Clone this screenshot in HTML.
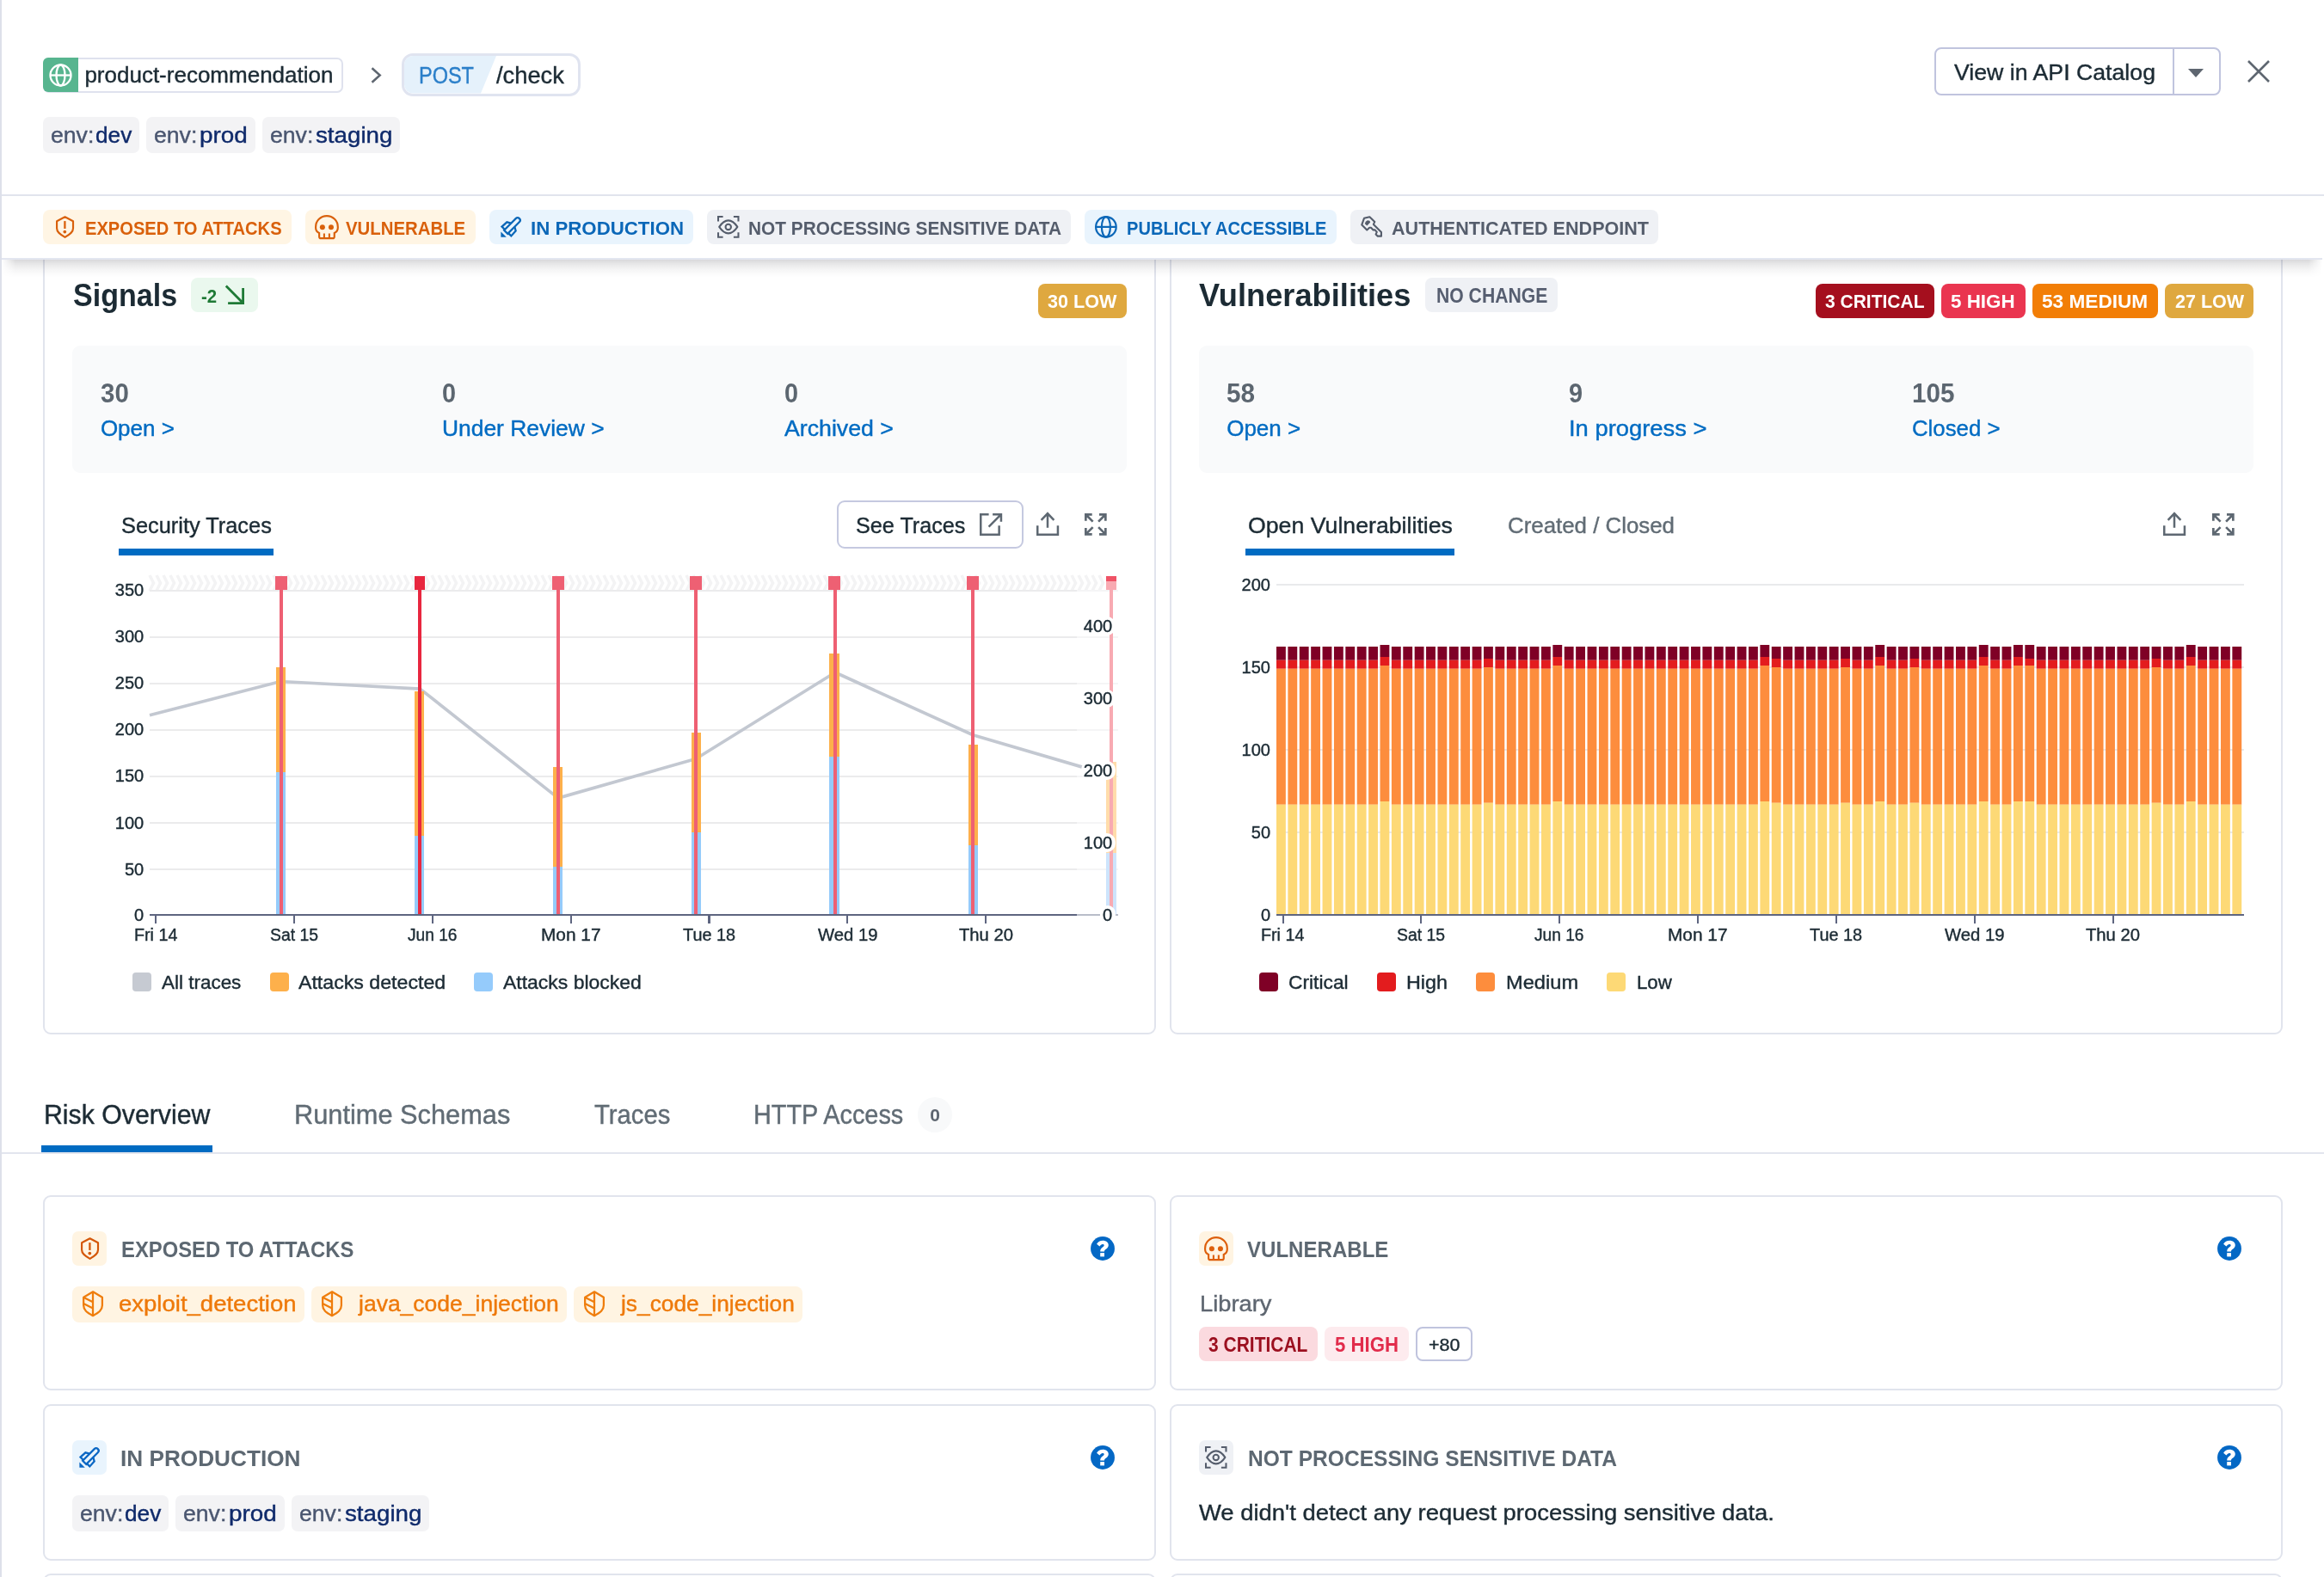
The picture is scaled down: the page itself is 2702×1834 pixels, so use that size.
<!DOCTYPE html>
<html><head><meta charset="utf-8"><title>Endpoint</title>
<style>
html,body{margin:0;padding:0;}
body{width:2702px;height:1834px;overflow:hidden;background:#fff;position:relative;font-family:"Liberation Sans",sans-serif;}
body div,body svg{position:absolute;box-sizing:border-box;}
.t{white-space:pre;}
svg{overflow:visible;}
</style></head><body><div id="root" style="left:0;top:0;width:2702px;height:1834px;will-change:transform;">
<div style="left:50.00px;top:250.00px;width:1294.00px;height:953.00px;background:#fff;border-radius:9px;border:2px solid #e1e4ed;"></div>
<div style="left:1360.00px;top:250.00px;width:1294.00px;height:953.00px;background:#fff;border-radius:9px;border:2px solid #e1e4ed;"></div>
<div style="left:2.00px;top:0.00px;width:2698.00px;height:300.00px;background:#fff;"></div>
<div style="left:2.00px;top:300.00px;width:2698.00px;height:2.00px;background:#e3e6f0;"></div>
<div style="left:2.00px;top:302.00px;width:2698.00px;height:20.00px;background:linear-gradient(rgba(10,10,20,0.155),rgba(10,10,20,0.085) 30%,rgba(10,10,20,0.035) 62%,rgba(10,10,20,0));-webkit-mask-image:linear-gradient(90deg,transparent,#000 16px,#000 calc(100% - 16px),transparent);"></div>
<div style="left:2.00px;top:226.00px;width:2700.00px;height:2.00px;background:#e1e4ed;"></div>
<div style="left:0.00px;top:0.00px;width:2.00px;height:1834.00px;background:#dde0ea;"></div>
<div style="left:50.00px;top:66.50px;width:348.50px;height:41.00px;background:#fff;border-radius:7px;border:2.5px solid #dfe2ee;"></div>
<div style="left:50.00px;top:67.00px;width:40.50px;height:40.00px;background:#57b58f;border-radius:6px 0 0 6px;"></div>
<svg style="left:56.50px;top:73.50px;" width="27" height="27" viewBox="0 0 27 27"><g fill="none" stroke="#fff" stroke-width="2.3"><circle cx="13.5" cy="13.5" r="12"/><ellipse cx="13.5" cy="13.5" rx="5" ry="12"/><path d="M1.500 13.500h24"/></g></svg>
<div class="t" style="left:98.40px;top:74px;font-size:26px;line-height:26px;color:#1c2b34;-webkit-text-stroke:0.4px;">product-recommendation</div>
<svg style="left:431.00px;top:77.50px;" width="13" height="20" viewBox="0 0 13 20"><path d="M1.500 1.300l9.200 8.200-9.200 8.200" fill="none" stroke="#5e6670" stroke-width="2.500"/></svg>
<div style="left:467.00px;top:62.00px;width:207.50px;height:49.50px;background:#fff;border-radius:13px;border:3px solid #e0e4f0;"></div>
<svg style="left:470px;top:65px" width="110" height="43.5" viewBox="0 0 110 43.5"><path d="M0 10a10 10 0 0 1 10-10H107L89 43.500H10a10 10 0 0 1-10-10z" fill="#e5f1fb"/></svg>
<div class="t" style="left:486.50px;top:75px;font-size:27px;line-height:27px;color:#2b7fc9;-webkit-text-stroke:0.4px;transform:scaleX(0.8699);transform-origin:0 0;">POST</div>
<div class="t" style="left:577.00px;top:75px;font-size:27px;line-height:27px;color:#1c2b34;-webkit-text-stroke:0.4px;transform:scaleX(1.0107);transform-origin:0 0;">/check</div>
<div style="left:50.00px;top:136.00px;width:112.00px;height:42.00px;background:#f3f3f5;border-radius:7px;"></div>
<div class="t" style="left:58.90px;top:144px;font-size:26px;line-height:26px;color:#4a5670;-webkit-text-stroke:0.4px;transform:scaleX(1.0236);transform-origin:0 0;">env:</div>
<div class="t" style="left:110.90px;top:144px;font-size:26px;line-height:26px;color:#0f2a6b;-webkit-text-stroke:0.4px;transform:scaleX(1.0081);transform-origin:0 0;">dev</div>
<div style="left:170.00px;top:136.00px;width:127.00px;height:42.00px;background:#f3f3f5;border-radius:7px;"></div>
<div class="t" style="left:178.90px;top:144px;font-size:26px;line-height:26px;color:#4a5670;-webkit-text-stroke:0.4px;transform:scaleX(1.0236);transform-origin:0 0;">env:</div>
<div class="t" style="left:232.40px;top:144px;font-size:26px;line-height:26px;color:#0f2a6b;-webkit-text-stroke:0.4px;transform:scaleX(1.0712);transform-origin:0 0;">prod</div>
<div style="left:305.00px;top:136.00px;width:160.00px;height:42.00px;background:#f3f3f5;border-radius:7px;"></div>
<div class="t" style="left:313.90px;top:144px;font-size:26px;line-height:26px;color:#4a5670;-webkit-text-stroke:0.4px;transform:scaleX(1.0236);transform-origin:0 0;">env:</div>
<div class="t" style="left:366.70px;top:144px;font-size:26px;line-height:26px;color:#0f2a6b;-webkit-text-stroke:0.4px;transform:scaleX(1.0662);transform-origin:0 0;">staging</div>
<div style="left:2249.00px;top:55.00px;width:332.50px;height:56.00px;background:#fff;border-radius:8px;border:2px solid #c0c4de;"></div>
<div style="left:2525.70px;top:55.00px;width:2.00px;height:56.00px;background:#c0c4de;"></div>
<div class="t" style="left:2271.50px;top:71px;font-size:26px;line-height:26px;color:#1c2b34;-webkit-text-stroke:0.4px;transform:scaleX(1.0268);transform-origin:0 0;">View in API Catalog</div>
<svg style="left:2544.00px;top:79.50px;" width="18" height="11" viewBox="0 0 18 11"><path d="M0 0h18l-9 10z" fill="#5e6670"/></svg>
<svg style="left:2613.00px;top:69.50px;" width="26" height="26" viewBox="0 0 26 26"><path d="M1 1l24 24M25 1l-24 24" stroke="#5e6670" stroke-width="2.6" fill="none"/></svg>
<div style="left:50.00px;top:243.70px;width:289.00px;height:40.00px;background:#fff5e4;border-radius:8px;"></div>
<svg style="left:64.6px;top:250.85px" width="21.1" height="26.2" viewBox="0 0 21.1 26.2"><path d="M10.550 1.250L1.080 6.200V14.500C1.080 19 4.500 21.500 10.550 24.900 16.600 21.500 20.020 19 20.020 14.500V6.200z" fill="none" stroke="#d9600b" stroke-width="2.150" stroke-linejoin="round"/><path d="M10.400 6.100V14.950" stroke="#d9600b" stroke-width="2.300" fill="none"/><circle cx="10.300" cy="18.550" r="1.850" fill="#d9600b"/></svg>
<div class="t" style="left:98.50px;top:255px;font-size:22.5px;line-height:22.5px;color:#d9600b;font-weight:700;transform:scaleX(0.8948);transform-origin:0 0;">EXPOSED TO ATTACKS</div>
<div style="left:355.00px;top:243.70px;width:198.00px;height:40.00px;background:#fff5e4;border-radius:8px;"></div>
<svg style="left:366.1px;top:249.8px" width="27.9" height="28.3" viewBox="0 0 27.9 28.3"><path d="M5.130 25.200V20.900C2.600 19.900 1.080 17.800 1.080 14.800V13.950A12.870 12.870 0 0 1 26.820 13.950V14.800C26.820 17.800 25.300 19.900 22.770 20.900V25.200A2 2 0 0 1 20.770 27.200H7.130A2 2 0 0 1 5.130 25.200z" fill="none" stroke="#d9600b" stroke-width="2.150"/><circle cx="8.870" cy="14.250" r="3" fill="#d9600b"/><circle cx="18.950" cy="14.250" r="3" fill="#d9600b"/><path d="M10.900 21.500V27.200M16.870 21.500V27.200" stroke="#d9600b" stroke-width="2.050" fill="none"/></svg>
<div class="t" style="left:402.30px;top:255px;font-size:22.5px;line-height:22.5px;color:#d9600b;font-weight:700;transform:scaleX(0.9051);transform-origin:0 0;">VULNERABLE</div>
<div style="left:569.00px;top:243.70px;width:237.00px;height:40.00px;background:#e9f4fd;border-radius:8px;"></div>
<svg style="left:581.5px;top:252.2px" width="24.5" height="24.8" viewBox="0 0 24.5 24.8"><g transform="translate(14 9.950) rotate(45)" fill="none" stroke="#0b67b8" stroke-width="2.300" stroke-linejoin="miter"><path d="M-2.900 11.050V-8.100A2.900 2.950 0 0 1 2.900 -8.100V11.050z"/><path d="M-2.900 -0.400L-7.250 2.100-7.650 10H-2.900M2.900 -0.400L7.250 2.100 7.650 10H2.900"/></g><path d="M0.400 17.500V23.700H6.800z" fill="#0b67b8"/></svg>
<div class="t" style="left:616.50px;top:255px;font-size:22.5px;line-height:22.5px;color:#0b67b8;font-weight:700;transform:scaleX(0.9889);transform-origin:0 0;">IN PRODUCTION</div>
<div style="left:822.00px;top:243.70px;width:423.00px;height:40.00px;background:#eff1f5;border-radius:8px;"></div>
<svg style="left:834.2px;top:251px" width="25.5" height="25.8" viewBox="0 0 25.5 25.8"><g fill="none" stroke="#555d6c" stroke-width="2.050"><path d="M1.020 6.600V1.020H6.600M18.900 1.020H24.480V6.600M24.480 19.200V24.780H18.900M6.600 24.780H1.020V19.200"/><path d="M2.200 12.900C5.500 8 8.800 5.400 12.800 5.400S20.100 8 23.400 12.900C20.100 17.800 16.800 20.400 12.800 20.400S5.500 17.800 2.200 12.900z" stroke-linejoin="round"/><circle cx="12.750" cy="12.950" r="3.200"/></g></svg>
<div class="t" style="left:869.70px;top:255px;font-size:22.5px;line-height:22.5px;color:#555d6c;font-weight:700;transform:scaleX(0.9263);transform-origin:0 0;">NOT PROCESSING SENSITIVE DATA</div>
<div style="left:1261.00px;top:243.70px;width:293.00px;height:40.00px;background:#e9f4fd;border-radius:8px;"></div>
<svg style="left:1273.1px;top:250.8px" width="25.8" height="25.8" viewBox="0 0 25.8 25.8"><g fill="none" stroke="#0b67b8" stroke-width="2.200"><circle cx="12.900" cy="12.900" r="11.800"/><ellipse cx="12.900" cy="12.900" rx="5" ry="11.800"/><path d="M1.100 12.900h23.600"/></g></svg>
<div class="t" style="left:1309.70px;top:255px;font-size:22.5px;line-height:22.5px;color:#0b67b8;font-weight:700;transform:scaleX(0.8923);transform-origin:0 0;">PUBLICLY ACCESSIBLE</div>
<div style="left:1570.00px;top:243.70px;width:358.00px;height:40.00px;background:#eff1f5;border-radius:8px;"></div>
<svg style="left:1582.1px;top:251px" width="25" height="24.8" viewBox="0 0 25 24.8"><path d="M4 2.800L10.400 1.200 16.300 6.900 14.900 9.900 23.950 19V23.650H19.800L17.600 21.400 18.800 18.900 16.600 16.400H14.600L12 13.700H10.200L7.300 16.400 1.300 10.400z" fill="none" stroke="#555d6c" stroke-width="2.100" stroke-linejoin="round"/><path d="M7.900 5.200L10.400 5.700 11.200 7.500 7.400 11.500 4.800 9.200 5.800 6.700z" fill="#555d6c"/></svg>
<div class="t" style="left:1617.80px;top:255px;font-size:22.5px;line-height:22.5px;color:#555d6c;font-weight:700;transform:scaleX(0.9581);transform-origin:0 0;">AUTHENTICATED ENDPOINT</div>
<div class="t" style="left:84.60px;top:325px;font-size:37px;line-height:37px;color:#1c2b34;font-weight:700;transform:scaleX(0.9199);transform-origin:0 0;">Signals</div>
<div style="left:222.00px;top:323.00px;width:78.00px;height:40.00px;background:#eaf8ee;border-radius:8px;"></div>
<div class="t" style="left:233.90px;top:334px;font-size:22px;line-height:22px;color:#1f7a36;font-weight:700;transform:scaleX(0.9244);transform-origin:0 0;">-2</div>
<svg style="left:261px;top:331px" width="23" height="23" viewBox="0 0 23 23"><path d="M1.800 1.400L21.300 21.300M21.600 4.100V21.600H4.100" fill="none" stroke="#1f7a36" stroke-width="2.800"/></svg>
<div style="left:1206.60px;top:330.00px;width:103.00px;height:39.50px;background:#dfa83f;border-radius:8px;"></div>
<div class="t" style="left:1218.00px;top:340px;font-size:22px;line-height:22px;color:#fff;font-weight:700;transform:scaleX(0.9823);transform-origin:0 0;">30 LOW</div>
<div style="left:84.00px;top:402.00px;width:1226.00px;height:147.50px;background:#f9fafb;border-radius:9px;"></div>
<div class="t" style="left:116.90px;top:441px;font-size:32px;line-height:32px;color:#5c6670;font-weight:700;transform:scaleX(0.9206);transform-origin:0 0;">30</div>
<div class="t" style="left:116.90px;top:485px;font-size:26px;line-height:26px;color:#006bc2;-webkit-text-stroke:0.4px;">Open &gt;</div>
<div class="t" style="left:514.40px;top:441px;font-size:32px;line-height:32px;color:#5c6670;font-weight:700;transform:scaleX(0.9009);transform-origin:0 0;">0</div>
<div class="t" style="left:514.40px;top:485px;font-size:26px;line-height:26px;color:#006bc2;-webkit-text-stroke:0.4px;transform:scaleX(1.0154);transform-origin:0 0;">Under Review &gt;</div>
<div class="t" style="left:911.60px;top:441px;font-size:32px;line-height:32px;color:#5c6670;font-weight:700;transform:scaleX(0.9009);transform-origin:0 0;">0</div>
<div class="t" style="left:911.60px;top:485px;font-size:26px;line-height:26px;color:#006bc2;-webkit-text-stroke:0.4px;transform:scaleX(1.0273);transform-origin:0 0;">Archived &gt;</div>
<div class="t" style="left:140.60px;top:598px;font-size:26px;line-height:26px;color:#1c2b34;-webkit-text-stroke:0.4px;transform:scaleX(0.9758);transform-origin:0 0;">Security Traces</div>
<div style="left:138.00px;top:638.00px;width:180.00px;height:8.00px;background:#006bc2;"></div>
<div style="left:973.00px;top:582.00px;width:217.30px;height:55.50px;background:#fff;border-radius:9px;border:2px solid #c5c9e0;"></div>
<div class="t" style="left:994.70px;top:598px;font-size:26px;line-height:26px;color:#1c2b34;-webkit-text-stroke:0.4px;transform:scaleX(0.9691);transform-origin:0 0;">See Traces</div>
<svg style="left:1138.8px;top:597px" width="26.3" height="26" viewBox="0 0 26.3 26"><g fill="none" stroke="#5e6872" stroke-width="2.500"><path d="M10.600 1.250H1.250V24.650H22.650V14.200"/><path d="M15.100 1.250H24.950V9.700M24.500 1.700L10.600 15.600"/></g></svg>
<svg style="left:1205px;top:595px" width="26.2" height="28" viewBox="0 0 26.2 28"><g fill="none" stroke="#5e6872" stroke-width="2.500"><path d="M1.250 16.200V26.700H24.950V16.200"/><path d="M13 1.800V18.800M5.600 9.800L13 2.100 20.400 9.800"/></g></svg>
<svg style="left:1261.2px;top:597.1px" width="25.7" height="25.7" viewBox="0 0 25.7 25.7"><g fill="none" stroke="#5e6872" stroke-width="2.700"><path d="M1.350 8.700V1.350H8.700M1.800 1.800L9.600 9.600M17 1.350H24.350V8.700M23.900 1.800L16.100 9.600M24.350 17V24.350H17M23.900 23.900L16.100 16.100M8.700 24.350H1.350V17M1.800 23.900L9.600 16.100"/></g></svg>
<svg style="left:174px;top:670px" width="1112" height="16" viewBox="0 0 1112 16"><defs><linearGradient id="cf" x1="0" x2="1"><stop offset="0.9" stop-color="#f3f3f4"/><stop offset="1" stop-color="#f8f8f9"/></linearGradient></defs><g fill="none" stroke="#f3f3f4" stroke-width="3.600"><path d="M0 -1l4.5 9-4.5 9" /><path d="M8 -1l4.5 9-4.5 9" /><path d="M16 -1l4.5 9-4.5 9" /><path d="M24 -1l4.5 9-4.5 9" /><path d="M32 -1l4.5 9-4.5 9" /><path d="M40 -1l4.5 9-4.5 9" /><path d="M48 -1l4.5 9-4.5 9" /><path d="M56 -1l4.5 9-4.5 9" /><path d="M64 -1l4.5 9-4.5 9" /><path d="M72 -1l4.5 9-4.5 9" /><path d="M80 -1l4.5 9-4.5 9" /><path d="M88 -1l4.5 9-4.5 9" /><path d="M96 -1l4.5 9-4.5 9" /><path d="M104 -1l4.5 9-4.5 9" /><path d="M112 -1l4.5 9-4.5 9" /><path d="M120 -1l4.5 9-4.5 9" /><path d="M128 -1l4.5 9-4.5 9" /><path d="M136 -1l4.5 9-4.5 9" /><path d="M144 -1l4.5 9-4.5 9" /><path d="M152 -1l4.5 9-4.5 9" /><path d="M160 -1l4.5 9-4.5 9" /><path d="M168 -1l4.5 9-4.5 9" /><path d="M176 -1l4.5 9-4.5 9" /><path d="M184 -1l4.5 9-4.5 9" /><path d="M192 -1l4.5 9-4.5 9" /><path d="M200 -1l4.5 9-4.5 9" /><path d="M208 -1l4.5 9-4.5 9" /><path d="M216 -1l4.5 9-4.5 9" /><path d="M224 -1l4.5 9-4.5 9" /><path d="M232 -1l4.5 9-4.5 9" /><path d="M240 -1l4.5 9-4.5 9" /><path d="M248 -1l4.5 9-4.5 9" /><path d="M256 -1l4.5 9-4.5 9" /><path d="M264 -1l4.5 9-4.5 9" /><path d="M272 -1l4.5 9-4.5 9" /><path d="M280 -1l4.5 9-4.5 9" /><path d="M288 -1l4.5 9-4.5 9" /><path d="M296 -1l4.5 9-4.5 9" /><path d="M304 -1l4.5 9-4.5 9" /><path d="M312 -1l4.5 9-4.5 9" /><path d="M320 -1l4.5 9-4.5 9" /><path d="M328 -1l4.5 9-4.5 9" /><path d="M336 -1l4.5 9-4.5 9" /><path d="M344 -1l4.5 9-4.5 9" /><path d="M352 -1l4.5 9-4.5 9" /><path d="M360 -1l4.5 9-4.5 9" /><path d="M368 -1l4.5 9-4.5 9" /><path d="M376 -1l4.5 9-4.5 9" /><path d="M384 -1l4.5 9-4.5 9" /><path d="M392 -1l4.5 9-4.5 9" /><path d="M400 -1l4.5 9-4.5 9" /><path d="M408 -1l4.5 9-4.5 9" /><path d="M416 -1l4.5 9-4.5 9" /><path d="M424 -1l4.5 9-4.5 9" /><path d="M432 -1l4.5 9-4.5 9" /><path d="M440 -1l4.5 9-4.5 9" /><path d="M448 -1l4.5 9-4.5 9" /><path d="M456 -1l4.5 9-4.5 9" /><path d="M464 -1l4.5 9-4.5 9" /><path d="M472 -1l4.5 9-4.5 9" /><path d="M480 -1l4.5 9-4.5 9" /><path d="M488 -1l4.5 9-4.5 9" /><path d="M496 -1l4.5 9-4.5 9" /><path d="M504 -1l4.5 9-4.5 9" /><path d="M512 -1l4.5 9-4.5 9" /><path d="M520 -1l4.5 9-4.5 9" /><path d="M528 -1l4.5 9-4.5 9" /><path d="M536 -1l4.5 9-4.5 9" /><path d="M544 -1l4.5 9-4.5 9" /><path d="M552 -1l4.5 9-4.5 9" /><path d="M560 -1l4.5 9-4.5 9" /><path d="M568 -1l4.5 9-4.5 9" /><path d="M576 -1l4.5 9-4.5 9" /><path d="M584 -1l4.5 9-4.5 9" /><path d="M592 -1l4.5 9-4.5 9" /><path d="M600 -1l4.5 9-4.5 9" /><path d="M608 -1l4.5 9-4.5 9" /><path d="M616 -1l4.5 9-4.5 9" /><path d="M624 -1l4.5 9-4.5 9" /><path d="M632 -1l4.5 9-4.5 9" /><path d="M640 -1l4.5 9-4.5 9" /><path d="M648 -1l4.5 9-4.5 9" /><path d="M656 -1l4.5 9-4.5 9" /><path d="M664 -1l4.5 9-4.5 9" /><path d="M672 -1l4.5 9-4.5 9" /><path d="M680 -1l4.5 9-4.5 9" /><path d="M688 -1l4.5 9-4.5 9" /><path d="M696 -1l4.5 9-4.5 9" /><path d="M704 -1l4.5 9-4.5 9" /><path d="M712 -1l4.5 9-4.5 9" /><path d="M720 -1l4.5 9-4.5 9" /><path d="M728 -1l4.5 9-4.5 9" /><path d="M736 -1l4.5 9-4.5 9" /><path d="M744 -1l4.5 9-4.5 9" /><path d="M752 -1l4.5 9-4.5 9" /><path d="M760 -1l4.5 9-4.5 9" /><path d="M768 -1l4.5 9-4.5 9" /><path d="M776 -1l4.5 9-4.5 9" /><path d="M784 -1l4.5 9-4.5 9" /><path d="M792 -1l4.5 9-4.5 9" /><path d="M800 -1l4.5 9-4.5 9" /><path d="M808 -1l4.5 9-4.5 9" /><path d="M816 -1l4.5 9-4.5 9" /><path d="M824 -1l4.5 9-4.5 9" /><path d="M832 -1l4.5 9-4.5 9" /><path d="M840 -1l4.5 9-4.5 9" /><path d="M848 -1l4.5 9-4.5 9" /><path d="M856 -1l4.5 9-4.5 9" /><path d="M864 -1l4.5 9-4.5 9" /><path d="M872 -1l4.5 9-4.5 9" /><path d="M880 -1l4.5 9-4.5 9" /><path d="M888 -1l4.5 9-4.5 9" /><path d="M896 -1l4.5 9-4.5 9" /><path d="M904 -1l4.5 9-4.5 9" /><path d="M912 -1l4.5 9-4.5 9" /><path d="M920 -1l4.5 9-4.5 9" /><path d="M928 -1l4.5 9-4.5 9" /><path d="M936 -1l4.5 9-4.5 9" /><path d="M944 -1l4.5 9-4.5 9" /><path d="M952 -1l4.5 9-4.5 9" /><path d="M960 -1l4.5 9-4.5 9" /><path d="M968 -1l4.5 9-4.5 9" /><path d="M976 -1l4.5 9-4.5 9" /><path d="M984 -1l4.5 9-4.5 9" /><path d="M992 -1l4.5 9-4.5 9" /><path d="M1000 -1l4.5 9-4.5 9" /><path d="M1008 -1l4.5 9-4.5 9" /><path d="M1016 -1l4.5 9-4.5 9" /><path d="M1024 -1l4.5 9-4.5 9" /><path d="M1032 -1l4.5 9-4.5 9" /><path d="M1040 -1l4.5 9-4.5 9" /><path d="M1048 -1l4.5 9-4.5 9" /><path d="M1056 -1l4.5 9-4.5 9" /><path d="M1064 -1l4.5 9-4.5 9" /><path d="M1072 -1l4.5 9-4.5 9" /><path d="M1080 -1l4.5 9-4.5 9" /><path d="M1088 -1l4.5 9-4.5 9" /><path d="M1096 -1l4.5 9-4.5 9" /><path d="M1104 -1l4.5 9-4.5 9" /></g></svg>
<div style="left:174.00px;top:1009.98px;width:1077.50px;height:2.00px;background:#ebebec;"></div>
<div style="left:1251.50px;top:1009.98px;width:48.50px;height:2.00px;background:#f5f5f6;"></div>
<div style="left:174.00px;top:955.96px;width:1077.50px;height:2.00px;background:#ebebec;"></div>
<div style="left:1251.50px;top:955.96px;width:48.50px;height:2.00px;background:#f5f5f6;"></div>
<div style="left:174.00px;top:901.94px;width:1077.50px;height:2.00px;background:#ebebec;"></div>
<div style="left:1251.50px;top:901.94px;width:48.50px;height:2.00px;background:#f5f5f6;"></div>
<div style="left:174.00px;top:847.92px;width:1077.50px;height:2.00px;background:#ebebec;"></div>
<div style="left:1251.50px;top:847.92px;width:48.50px;height:2.00px;background:#f5f5f6;"></div>
<div style="left:174.00px;top:793.90px;width:1077.50px;height:2.00px;background:#ebebec;"></div>
<div style="left:1251.50px;top:793.90px;width:48.50px;height:2.00px;background:#f5f5f6;"></div>
<div style="left:174.00px;top:739.88px;width:1077.50px;height:2.00px;background:#ebebec;"></div>
<div style="left:1251.50px;top:739.88px;width:48.50px;height:2.00px;background:#f5f5f6;"></div>
<div style="left:174.00px;top:685.86px;width:1077.50px;height:2.00px;background:#ebebec;"></div>
<div style="left:1251.50px;top:685.86px;width:48.50px;height:2.00px;background:#f5f5f6;"></div>
<div class="t" style="left:156.10px;top:1054px;font-size:20px;line-height:20px;color:#1c2b34;-webkit-text-stroke:0.4px;">0</div>
<div class="t" style="left:145.00px;top:1001px;font-size:20px;line-height:20px;color:#1c2b34;-webkit-text-stroke:0.4px;">50</div>
<div class="t" style="left:133.80px;top:947px;font-size:20px;line-height:20px;color:#1c2b34;-webkit-text-stroke:0.4px;">100</div>
<div class="t" style="left:133.80px;top:892px;font-size:20px;line-height:20px;color:#1c2b34;-webkit-text-stroke:0.4px;">150</div>
<div class="t" style="left:133.80px;top:838px;font-size:20px;line-height:20px;color:#1c2b34;-webkit-text-stroke:0.4px;">200</div>
<div class="t" style="left:133.80px;top:784px;font-size:20px;line-height:20px;color:#1c2b34;-webkit-text-stroke:0.4px;">250</div>
<div class="t" style="left:133.80px;top:730px;font-size:20px;line-height:20px;color:#1c2b34;-webkit-text-stroke:0.4px;">300</div>
<div class="t" style="left:133.80px;top:676px;font-size:20px;line-height:20px;color:#1c2b34;-webkit-text-stroke:0.4px;">350</div>
<svg style="left:0.00px;top:0.00px;pointer-events:none;" width="2702" height="1834" viewBox="0 0 2702 1834"><polyline points="174,831.8 326.3,792.5 488.4,801.1 648.9,928.1 809,882.5 971,782 1131.2,854.8 1258.5,892.1" fill="none" stroke="#c3c8d1" stroke-width="3.7" stroke-linejoin="round"/></svg>
<div style="left:321.10px;top:776.00px;width:11.40px;height:122.20px;background:#fdb04b;"></div>
<div style="left:321.10px;top:898.20px;width:11.40px;height:165.50px;background:#95cbfb;"></div>
<div style="left:325.00px;top:678.00px;width:4.00px;height:385.70px;background:#ee6073;"></div>
<div style="left:319.80px;top:670.00px;width:14.00px;height:16.00px;background:#ee6073;"></div>
<div style="left:482.00px;top:804.00px;width:11.00px;height:168.00px;background:#fdb04b;"></div>
<div style="left:482.00px;top:972.00px;width:11.00px;height:91.70px;background:#95cbfb;"></div>
<div style="left:485.90px;top:678.00px;width:4.60px;height:385.70px;background:#e8273f;"></div>
<div style="left:481.50px;top:670.00px;width:12.00px;height:16.00px;background:#e8273f;"></div>
<div style="left:642.90px;top:892.10px;width:11.30px;height:116.20px;background:#fdb04b;"></div>
<div style="left:642.90px;top:1008.30px;width:11.30px;height:55.40px;background:#95cbfb;"></div>
<div style="left:646.80px;top:678.00px;width:4.20px;height:385.70px;background:#ee6073;"></div>
<div style="left:641.55px;top:670.00px;width:14.00px;height:16.00px;background:#ee6073;"></div>
<div style="left:803.90px;top:852.00px;width:11.00px;height:115.80px;background:#fdb04b;"></div>
<div style="left:803.90px;top:967.80px;width:11.00px;height:95.90px;background:#95cbfb;"></div>
<div style="left:807.10px;top:678.00px;width:4.00px;height:385.70px;background:#ee6073;"></div>
<div style="left:802.40px;top:670.00px;width:14.00px;height:16.00px;background:#ee6073;"></div>
<div style="left:964.40px;top:760.00px;width:11.80px;height:119.70px;background:#fdb04b;"></div>
<div style="left:964.40px;top:879.70px;width:11.80px;height:184.00px;background:#95cbfb;"></div>
<div style="left:969.00px;top:678.00px;width:4.00px;height:385.70px;background:#ee6073;"></div>
<div style="left:963.30px;top:670.00px;width:14.00px;height:16.00px;background:#ee6073;"></div>
<div style="left:1125.70px;top:865.90px;width:11.00px;height:117.50px;background:#fdb04b;"></div>
<div style="left:1125.70px;top:983.40px;width:11.00px;height:80.30px;background:#95cbfb;"></div>
<div style="left:1129.20px;top:678.00px;width:4.00px;height:385.70px;background:#ee6073;"></div>
<div style="left:1124.20px;top:670.00px;width:14.00px;height:16.00px;background:#ee6073;"></div>
<div style="left:1286.30px;top:885.70px;width:11.30px;height:106.00px;background:#ffdcab;"></div>
<div style="left:1286.30px;top:991.60px;width:11.30px;height:72.10px;background:#cde4fc;"></div>
<div style="left:1290.00px;top:686.00px;width:4.00px;height:377.70px;background:#f8aab2;"></div>
<div style="left:1286.00px;top:670.00px;width:12.00px;height:6.00px;background:#ef5366;"></div>
<div style="left:1286.00px;top:676.00px;width:12.00px;height:10.00px;background:#f8aab2;"></div>
<div style="left:174.00px;top:1062.70px;width:1077.50px;height:2.20px;background:#5e6580;"></div>
<div style="left:1251.50px;top:1062.70px;width:48.50px;height:2.00px;background:#b9bdc9;"></div>
<div style="left:180.10px;top:1064.90px;width:2.20px;height:8.80px;background:#5e6580;"></div>
<div class="t" style="left:156.00px;top:1077px;font-size:20px;line-height:20px;color:#1c2b34;-webkit-text-stroke:0.4px;transform:scaleX(0.9863);transform-origin:0 0;">Fri 14</div>
<div style="left:340.90px;top:1064.90px;width:2.20px;height:8.80px;background:#5e6580;"></div>
<div class="t" style="left:314.00px;top:1077px;font-size:20px;line-height:20px;color:#1c2b34;-webkit-text-stroke:0.4px;transform:scaleX(0.9689);transform-origin:0 0;">Sat 15</div>
<div style="left:501.50px;top:1064.90px;width:2.20px;height:8.80px;background:#5e6580;"></div>
<div class="t" style="left:473.85px;top:1077px;font-size:20px;line-height:20px;color:#1c2b34;-webkit-text-stroke:0.4px;transform:scaleX(0.9567);transform-origin:0 0;">Jun 16</div>
<div style="left:663.10px;top:1064.90px;width:2.20px;height:8.80px;background:#5e6580;"></div>
<div class="t" style="left:629.45px;top:1077px;font-size:20px;line-height:20px;color:#1c2b34;-webkit-text-stroke:0.4px;transform:scaleX(1.0420);transform-origin:0 0;">Mon 17</div>
<div style="left:823.40px;top:1064.90px;width:2.20px;height:8.80px;background:#5e6580;"></div>
<div class="t" style="left:794.00px;top:1077px;font-size:20px;line-height:20px;color:#1c2b34;-webkit-text-stroke:0.4px;transform:scaleX(0.9919);transform-origin:0 0;">Tue 18</div>
<div style="left:984.30px;top:1064.90px;width:2.20px;height:8.80px;background:#5e6580;"></div>
<div class="t" style="left:950.65px;top:1077px;font-size:20px;line-height:20px;color:#1c2b34;-webkit-text-stroke:0.4px;transform:scaleX(1.0131);transform-origin:0 0;">Wed 19</div>
<div style="left:1145.10px;top:1064.90px;width:2.20px;height:8.80px;background:#5e6580;"></div>
<div class="t" style="left:1114.70px;top:1077px;font-size:20px;line-height:20px;color:#1c2b34;-webkit-text-stroke:0.4px;transform:scaleX(1.0112);transform-origin:0 0;">Thu 20</div>
<div style="left:1256.83px;top:717.20px;width:40.37px;height:21.50px;background:#fff;border-radius:10px;"></div>
<div class="t" style="left:1259.80px;top:718px;font-size:20px;line-height:20px;color:#1c2b34;-webkit-text-stroke:0.4px;">400</div>
<div style="left:1256.83px;top:801.70px;width:40.37px;height:21.50px;background:#fff;border-radius:10px;"></div>
<div class="t" style="left:1259.80px;top:802px;font-size:20px;line-height:20px;color:#1c2b34;-webkit-text-stroke:0.4px;">300</div>
<div style="left:1256.83px;top:885.20px;width:40.37px;height:21.50px;background:#fff;border-radius:10px;"></div>
<div class="t" style="left:1259.80px;top:886px;font-size:20px;line-height:20px;color:#1c2b34;-webkit-text-stroke:0.4px;">200</div>
<div style="left:1256.83px;top:969.30px;width:40.37px;height:21.50px;background:#fff;border-radius:10px;"></div>
<div class="t" style="left:1259.80px;top:970px;font-size:20px;line-height:20px;color:#1c2b34;-webkit-text-stroke:0.4px;">100</div>
<div style="left:1279.08px;top:1053.30px;width:18.12px;height:21.50px;background:#fff;border-radius:10px;"></div>
<div class="t" style="left:1282.10px;top:1054px;font-size:20px;line-height:20px;color:#1c2b34;-webkit-text-stroke:0.4px;">0</div>
<div style="left:154.00px;top:1131.00px;width:22.00px;height:22.00px;background:#c6cad2;border-radius:4px;"></div>
<div class="t" style="left:188.30px;top:1132px;font-size:22px;line-height:22px;color:#1c2b34;-webkit-text-stroke:0.4px;transform:scaleX(1.0208);transform-origin:0 0;">All traces</div>
<div style="left:313.70px;top:1131.00px;width:22.00px;height:22.00px;background:#fdb04b;border-radius:4px;"></div>
<div class="t" style="left:347.40px;top:1132px;font-size:22px;line-height:22px;color:#1c2b34;-webkit-text-stroke:0.4px;transform:scaleX(1.0523);transform-origin:0 0;">Attacks detected</div>
<div style="left:551.00px;top:1131.00px;width:22.00px;height:22.00px;background:#95cbfb;border-radius:4px;"></div>
<div class="t" style="left:585.00px;top:1132px;font-size:22px;line-height:22px;color:#1c2b34;-webkit-text-stroke:0.4px;transform:scaleX(1.0434);transform-origin:0 0;">Attacks blocked</div>
<div class="t" style="left:1394.10px;top:325px;font-size:37px;line-height:37px;color:#1c2b34;font-weight:700;transform:scaleX(0.9797);transform-origin:0 0;">Vulnerabilities</div>
<div style="left:1657.00px;top:323.00px;width:154.00px;height:40.00px;background:#eff1f5;border-radius:8px;"></div>
<div class="t" style="left:1669.70px;top:333px;font-size:23px;line-height:23px;color:#565e70;font-weight:700;transform:scaleX(0.9201);transform-origin:0 0;">NO CHANGE</div>
<div style="left:2110.90px;top:330.00px;width:137.80px;height:39.50px;background:#a50f1e;border-radius:8px;"></div>
<div class="t" style="left:2121.60px;top:340px;font-size:22px;line-height:22px;color:#fff;font-weight:700;transform:scaleX(0.9545);transform-origin:0 0;">3 CRITICAL</div>
<div style="left:2257.10px;top:330.00px;width:98.00px;height:39.50px;background:#ea3550;border-radius:8px;"></div>
<div class="t" style="left:2268.20px;top:340px;font-size:22px;line-height:22px;color:#fff;font-weight:700;transform:scaleX(1.0168);transform-origin:0 0;">5 HIGH</div>
<div style="left:2362.80px;top:330.00px;width:146.20px;height:39.50px;background:#f27e06;border-radius:8px;"></div>
<div class="t" style="left:2373.70px;top:340px;font-size:22px;line-height:22px;color:#fff;font-weight:700;transform:scaleX(1.0285);transform-origin:0 0;">53 MEDIUM</div>
<div style="left:2517.30px;top:330.00px;width:102.70px;height:39.50px;background:#dfa83f;border-radius:8px;"></div>
<div class="t" style="left:2528.70px;top:340px;font-size:22px;line-height:22px;color:#fff;font-weight:700;transform:scaleX(0.9786);transform-origin:0 0;">27 LOW</div>
<div style="left:1394.00px;top:402.00px;width:1226.00px;height:147.50px;background:#f9fafb;border-radius:9px;"></div>
<div class="t" style="left:1426.20px;top:441px;font-size:32px;line-height:32px;color:#5c6670;font-weight:700;transform:scaleX(0.9291);transform-origin:0 0;">58</div>
<div class="t" style="left:1426.20px;top:485px;font-size:26px;line-height:26px;color:#006bc2;-webkit-text-stroke:0.4px;">Open &gt;</div>
<div class="t" style="left:1824.10px;top:441px;font-size:32px;line-height:32px;color:#5c6670;font-weight:700;transform:scaleX(0.9009);transform-origin:0 0;">9</div>
<div class="t" style="left:1824.10px;top:485px;font-size:26px;line-height:26px;color:#006bc2;-webkit-text-stroke:0.4px;transform:scaleX(1.0525);transform-origin:0 0;">In progress &gt;</div>
<div class="t" style="left:2223.20px;top:441px;font-size:32px;line-height:32px;color:#5c6670;font-weight:700;transform:scaleX(0.9263);transform-origin:0 0;">105</div>
<div class="t" style="left:2223.20px;top:485px;font-size:26px;line-height:26px;color:#006bc2;-webkit-text-stroke:0.4px;transform:scaleX(0.9918);transform-origin:0 0;">Closed &gt;</div>
<div class="t" style="left:1450.80px;top:598px;font-size:26px;line-height:26px;color:#1c2b34;-webkit-text-stroke:0.4px;transform:scaleX(1.0268);transform-origin:0 0;">Open Vulnerabilities</div>
<div style="left:1448.00px;top:638.00px;width:243.00px;height:8.00px;background:#006bc2;"></div>
<div class="t" style="left:1753.20px;top:598px;font-size:26px;line-height:26px;color:#616c75;-webkit-text-stroke:0.4px;transform:scaleX(0.9942);transform-origin:0 0;">Created / Closed</div>
<svg style="left:2515.3px;top:595px" width="26.2" height="28" viewBox="0 0 26.2 28"><g fill="none" stroke="#5e6872" stroke-width="2.500"><path d="M1.250 16.200V26.700H24.950V16.200"/><path d="M13 1.800V18.800M5.600 9.800L13 2.100 20.400 9.800"/></g></svg>
<svg style="left:2571.5px;top:597.1px" width="25.7" height="25.7" viewBox="0 0 25.7 25.7"><g fill="none" stroke="#5e6872" stroke-width="2.700"><path d="M1.350 8.700V1.350H8.700M1.800 1.800L9.600 9.600M17 1.350H24.350V8.700M23.900 1.800L16.100 9.600M24.350 17V24.350H17M23.900 23.900L16.100 16.100M8.700 24.350H1.350V17M1.800 23.900L9.600 16.100"/></g></svg>
<div style="left:1484.00px;top:966.80px;width:1125.00px;height:2.00px;background:#e9eaec;"></div>
<div style="left:1484.00px;top:870.90px;width:1125.00px;height:2.00px;background:#e9eaec;"></div>
<div style="left:1484.00px;top:775.00px;width:1125.00px;height:2.00px;background:#e9eaec;"></div>
<div style="left:1484.00px;top:679.10px;width:1125.00px;height:2.00px;background:#e9eaec;"></div>
<div class="t" style="left:1465.90px;top:1054px;font-size:20px;line-height:20px;color:#1c2b34;-webkit-text-stroke:0.4px;">0</div>
<div class="t" style="left:1454.80px;top:958px;font-size:20px;line-height:20px;color:#1c2b34;-webkit-text-stroke:0.4px;">50</div>
<div class="t" style="left:1443.60px;top:862px;font-size:20px;line-height:20px;color:#1c2b34;-webkit-text-stroke:0.4px;">100</div>
<div class="t" style="left:1443.60px;top:766px;font-size:20px;line-height:20px;color:#1c2b34;-webkit-text-stroke:0.4px;">150</div>
<div class="t" style="left:1443.60px;top:670px;font-size:20px;line-height:20px;color:#1c2b34;-webkit-text-stroke:0.4px;">200</div>
<svg style="left:0.00px;top:0.00px;pointer-events:none;" width="2702" height="1834" viewBox="0 0 2702 1834"><path d="M1484.00 751.9h10.85V767.8h-10.85zM1497.39 751.9h10.85V767.8h-10.85zM1510.78 751.9h10.85V767.8h-10.85zM1524.17 751.9h10.85V767.8h-10.85zM1537.56 751.9h10.85V767.8h-10.85zM1550.95 751.9h10.85V767.8h-10.85zM1564.34 751.9h10.85V767.8h-10.85zM1577.73 751.9h10.85V767.8h-10.85zM1591.12 751.9h10.85V767.8h-10.85zM1604.51 750.1h10.85V763.9h-10.85zM1617.90 751.9h10.85V767.8h-10.85zM1631.29 751.9h10.85V767.8h-10.85zM1644.68 751.9h10.85V767.8h-10.85zM1658.07 751.9h10.85V767.8h-10.85zM1671.46 751.9h10.85V767.8h-10.85zM1684.85 751.9h10.85V767.8h-10.85zM1698.24 751.9h10.85V767.8h-10.85zM1711.63 751.9h10.85V767.8h-10.85zM1725.02 751.9h10.85V766.0h-10.85zM1738.41 751.9h10.85V767.8h-10.85zM1751.80 751.9h10.85V767.8h-10.85zM1765.19 751.9h10.85V767.8h-10.85zM1778.58 751.9h10.85V767.8h-10.85zM1791.97 751.9h10.85V767.8h-10.85zM1805.36 750.1h10.85V763.9h-10.85zM1818.75 751.9h10.85V767.8h-10.85zM1832.14 751.9h10.85V767.8h-10.85zM1845.53 751.9h10.85V767.8h-10.85zM1858.92 751.9h10.85V767.8h-10.85zM1872.31 751.9h10.85V767.8h-10.85zM1885.70 751.9h10.85V767.8h-10.85zM1899.09 751.9h10.85V767.8h-10.85zM1912.48 751.9h10.85V767.8h-10.85zM1925.87 751.9h10.85V767.8h-10.85zM1939.26 751.9h10.85V767.8h-10.85zM1952.65 751.9h10.85V767.8h-10.85zM1966.04 751.9h10.85V767.8h-10.85zM1979.43 751.9h10.85V767.8h-10.85zM1992.82 751.9h10.85V767.8h-10.85zM2006.21 751.9h10.85V767.8h-10.85zM2019.60 751.9h10.85V767.8h-10.85zM2032.99 751.9h10.85V767.8h-10.85zM2046.38 750.1h10.85V763.9h-10.85zM2059.77 751.9h10.85V766.0h-10.85zM2073.16 751.9h10.85V767.8h-10.85zM2086.55 751.9h10.85V767.8h-10.85zM2099.94 751.9h10.85V767.8h-10.85zM2113.33 751.9h10.85V767.8h-10.85zM2126.72 751.9h10.85V767.8h-10.85zM2140.11 751.9h10.85V766.0h-10.85zM2153.50 751.9h10.85V767.8h-10.85zM2166.89 751.9h10.85V767.8h-10.85zM2180.28 750.1h10.85V763.9h-10.85zM2193.67 751.9h10.85V767.8h-10.85zM2207.06 751.9h10.85V767.8h-10.85zM2220.45 751.9h10.85V766.0h-10.85zM2233.84 751.9h10.85V767.8h-10.85zM2247.23 751.9h10.85V767.8h-10.85zM2260.62 751.9h10.85V767.8h-10.85zM2274.01 751.9h10.85V767.8h-10.85zM2287.40 751.9h10.85V767.8h-10.85zM2300.79 750.1h10.85V763.9h-10.85zM2314.18 751.9h10.85V767.8h-10.85zM2327.57 751.9h10.85V767.8h-10.85zM2340.96 750.1h10.85V763.9h-10.85zM2354.35 750.1h10.85V765.9h-10.85zM2367.74 751.9h10.85V767.8h-10.85zM2381.13 751.9h10.85V767.8h-10.85zM2394.52 751.9h10.85V767.8h-10.85zM2407.91 751.9h10.85V767.8h-10.85zM2421.30 751.9h10.85V767.8h-10.85zM2434.69 751.9h10.85V767.8h-10.85zM2448.08 751.9h10.85V767.8h-10.85zM2461.47 751.9h10.85V767.8h-10.85zM2474.86 751.9h10.85V767.8h-10.85zM2488.25 751.9h10.85V767.8h-10.85zM2501.64 751.9h10.85V766.0h-10.85zM2515.03 751.9h10.85V767.8h-10.85zM2528.42 751.9h10.85V767.8h-10.85zM2541.81 750.1h10.85V763.9h-10.85zM2555.20 751.9h10.85V767.8h-10.85zM2568.59 751.9h10.85V767.8h-10.85zM2581.98 751.9h10.85V767.8h-10.85zM2595.37 751.9h10.85V767.8h-10.85z" fill="#7f0026"/><path d="M1484.00 767.8h10.85V777.8h-10.85zM1497.39 767.8h10.85V777.8h-10.85zM1510.78 767.8h10.85V777.8h-10.85zM1524.17 767.8h10.85V777.8h-10.85zM1537.56 767.8h10.85V777.8h-10.85zM1550.95 767.8h10.85V777.8h-10.85zM1564.34 767.8h10.85V777.8h-10.85zM1577.73 767.8h10.85V777.8h-10.85zM1591.12 767.8h10.85V777.8h-10.85zM1604.51 763.9h10.85V773.9h-10.85zM1617.90 767.8h10.85V777.8h-10.85zM1631.29 767.8h10.85V777.8h-10.85zM1644.68 767.8h10.85V777.8h-10.85zM1658.07 767.8h10.85V777.8h-10.85zM1671.46 767.8h10.85V777.8h-10.85zM1684.85 767.8h10.85V777.8h-10.85zM1698.24 767.8h10.85V777.8h-10.85zM1711.63 767.8h10.85V777.8h-10.85zM1725.02 766.0h10.85V776.0h-10.85zM1738.41 767.8h10.85V777.8h-10.85zM1751.80 767.8h10.85V777.8h-10.85zM1765.19 767.8h10.85V777.8h-10.85zM1778.58 767.8h10.85V777.8h-10.85zM1791.97 767.8h10.85V777.8h-10.85zM1805.36 763.9h10.85V773.9h-10.85zM1818.75 767.8h10.85V777.8h-10.85zM1832.14 767.8h10.85V777.8h-10.85zM1845.53 767.8h10.85V777.8h-10.85zM1858.92 767.8h10.85V777.8h-10.85zM1872.31 767.8h10.85V777.8h-10.85zM1885.70 767.8h10.85V777.8h-10.85zM1899.09 767.8h10.85V777.8h-10.85zM1912.48 767.8h10.85V777.8h-10.85zM1925.87 767.8h10.85V777.8h-10.85zM1939.26 767.8h10.85V777.8h-10.85zM1952.65 767.8h10.85V777.8h-10.85zM1966.04 767.8h10.85V777.8h-10.85zM1979.43 767.8h10.85V777.8h-10.85zM1992.82 767.8h10.85V777.8h-10.85zM2006.21 767.8h10.85V777.8h-10.85zM2019.60 767.8h10.85V777.8h-10.85zM2032.99 767.8h10.85V777.8h-10.85zM2046.38 763.9h10.85V773.9h-10.85zM2059.77 766.0h10.85V776.0h-10.85zM2073.16 767.8h10.85V777.8h-10.85zM2086.55 767.8h10.85V777.8h-10.85zM2099.94 767.8h10.85V777.8h-10.85zM2113.33 767.8h10.85V777.8h-10.85zM2126.72 767.8h10.85V777.8h-10.85zM2140.11 766.0h10.85V776.0h-10.85zM2153.50 767.8h10.85V777.8h-10.85zM2166.89 767.8h10.85V777.8h-10.85zM2180.28 763.9h10.85V773.9h-10.85zM2193.67 767.8h10.85V777.8h-10.85zM2207.06 767.8h10.85V777.8h-10.85zM2220.45 766.0h10.85V776.0h-10.85zM2233.84 767.8h10.85V777.8h-10.85zM2247.23 767.8h10.85V777.8h-10.85zM2260.62 767.8h10.85V777.8h-10.85zM2274.01 767.8h10.85V777.8h-10.85zM2287.40 767.8h10.85V777.8h-10.85zM2300.79 763.9h10.85V773.9h-10.85zM2314.18 767.8h10.85V777.8h-10.85zM2327.57 767.8h10.85V777.8h-10.85zM2340.96 763.9h10.85V773.9h-10.85zM2354.35 765.9h10.85V773.9h-10.85zM2367.74 767.8h10.85V777.8h-10.85zM2381.13 767.8h10.85V777.8h-10.85zM2394.52 767.8h10.85V777.8h-10.85zM2407.91 767.8h10.85V777.8h-10.85zM2421.30 767.8h10.85V777.8h-10.85zM2434.69 767.8h10.85V777.8h-10.85zM2448.08 767.8h10.85V777.8h-10.85zM2461.47 767.8h10.85V777.8h-10.85zM2474.86 767.8h10.85V777.8h-10.85zM2488.25 767.8h10.85V777.8h-10.85zM2501.64 766.0h10.85V776.0h-10.85zM2515.03 767.8h10.85V777.8h-10.85zM2528.42 767.8h10.85V777.8h-10.85zM2541.81 763.9h10.85V773.9h-10.85zM2555.20 767.8h10.85V777.8h-10.85zM2568.59 767.8h10.85V777.8h-10.85zM2581.98 767.8h10.85V777.8h-10.85zM2595.37 767.8h10.85V777.8h-10.85z" fill="#e31c1e"/><path d="M1484.00 777.8h10.85V935.8h-10.85zM1497.39 777.8h10.85V935.8h-10.85zM1510.78 777.8h10.85V935.8h-10.85zM1524.17 777.8h10.85V935.8h-10.85zM1537.56 777.8h10.85V935.8h-10.85zM1550.95 777.8h10.85V935.8h-10.85zM1564.34 777.8h10.85V935.8h-10.85zM1577.73 777.8h10.85V935.8h-10.85zM1591.12 777.8h10.85V935.8h-10.85zM1604.51 773.9h10.85V931.9h-10.85zM1617.90 777.8h10.85V935.8h-10.85zM1631.29 777.8h10.85V935.8h-10.85zM1644.68 777.8h10.85V935.8h-10.85zM1658.07 777.8h10.85V935.8h-10.85zM1671.46 777.8h10.85V935.8h-10.85zM1684.85 777.8h10.85V935.8h-10.85zM1698.24 777.8h10.85V935.8h-10.85zM1711.63 777.8h10.85V935.8h-10.85zM1725.02 776.0h10.85V933.8h-10.85zM1738.41 777.8h10.85V935.8h-10.85zM1751.80 777.8h10.85V935.8h-10.85zM1765.19 777.8h10.85V935.8h-10.85zM1778.58 777.8h10.85V935.8h-10.85zM1791.97 777.8h10.85V935.8h-10.85zM1805.36 773.9h10.85V931.9h-10.85zM1818.75 777.8h10.85V935.8h-10.85zM1832.14 777.8h10.85V935.8h-10.85zM1845.53 777.8h10.85V935.8h-10.85zM1858.92 777.8h10.85V935.8h-10.85zM1872.31 777.8h10.85V935.8h-10.85zM1885.70 777.8h10.85V935.8h-10.85zM1899.09 777.8h10.85V935.8h-10.85zM1912.48 777.8h10.85V935.8h-10.85zM1925.87 777.8h10.85V935.8h-10.85zM1939.26 777.8h10.85V935.8h-10.85zM1952.65 777.8h10.85V935.8h-10.85zM1966.04 777.8h10.85V935.8h-10.85zM1979.43 777.8h10.85V935.8h-10.85zM1992.82 777.8h10.85V935.8h-10.85zM2006.21 777.8h10.85V935.8h-10.85zM2019.60 777.8h10.85V935.8h-10.85zM2032.99 777.8h10.85V935.8h-10.85zM2046.38 773.9h10.85V931.9h-10.85zM2059.77 776.0h10.85V933.8h-10.85zM2073.16 777.8h10.85V935.8h-10.85zM2086.55 777.8h10.85V935.8h-10.85zM2099.94 777.8h10.85V935.8h-10.85zM2113.33 777.8h10.85V935.8h-10.85zM2126.72 777.8h10.85V935.8h-10.85zM2140.11 776.0h10.85V933.8h-10.85zM2153.50 777.8h10.85V935.8h-10.85zM2166.89 777.8h10.85V935.8h-10.85zM2180.28 773.9h10.85V931.9h-10.85zM2193.67 777.8h10.85V935.8h-10.85zM2207.06 777.8h10.85V935.8h-10.85zM2220.45 776.0h10.85V933.8h-10.85zM2233.84 777.8h10.85V935.8h-10.85zM2247.23 777.8h10.85V935.8h-10.85zM2260.62 777.8h10.85V935.8h-10.85zM2274.01 777.8h10.85V935.8h-10.85zM2287.40 777.8h10.85V935.8h-10.85zM2300.79 773.9h10.85V931.9h-10.85zM2314.18 777.8h10.85V935.8h-10.85zM2327.57 777.8h10.85V935.8h-10.85zM2340.96 773.9h10.85V931.9h-10.85zM2354.35 773.9h10.85V931.9h-10.85zM2367.74 777.8h10.85V935.8h-10.85zM2381.13 777.8h10.85V935.8h-10.85zM2394.52 777.8h10.85V935.8h-10.85zM2407.91 777.8h10.85V935.8h-10.85zM2421.30 777.8h10.85V935.8h-10.85zM2434.69 777.8h10.85V935.8h-10.85zM2448.08 777.8h10.85V935.8h-10.85zM2461.47 777.8h10.85V935.8h-10.85zM2474.86 777.8h10.85V935.8h-10.85zM2488.25 777.8h10.85V935.8h-10.85zM2501.64 776.0h10.85V933.8h-10.85zM2515.03 777.8h10.85V935.8h-10.85zM2528.42 777.8h10.85V935.8h-10.85zM2541.81 773.9h10.85V931.9h-10.85zM2555.20 777.8h10.85V935.8h-10.85zM2568.59 777.8h10.85V935.8h-10.85zM2581.98 777.8h10.85V935.8h-10.85zM2595.37 777.8h10.85V935.8h-10.85z" fill="#fd8d3d"/><path d="M1484.00 935.8h10.85V1063.7h-10.85zM1497.39 935.8h10.85V1063.7h-10.85zM1510.78 935.8h10.85V1063.7h-10.85zM1524.17 935.8h10.85V1063.7h-10.85zM1537.56 935.8h10.85V1063.7h-10.85zM1550.95 935.8h10.85V1063.7h-10.85zM1564.34 935.8h10.85V1063.7h-10.85zM1577.73 935.8h10.85V1063.7h-10.85zM1591.12 935.8h10.85V1063.7h-10.85zM1604.51 931.9h10.85V1063.7h-10.85zM1617.90 935.8h10.85V1063.7h-10.85zM1631.29 935.8h10.85V1063.7h-10.85zM1644.68 935.8h10.85V1063.7h-10.85zM1658.07 935.8h10.85V1063.7h-10.85zM1671.46 935.8h10.85V1063.7h-10.85zM1684.85 935.8h10.85V1063.7h-10.85zM1698.24 935.8h10.85V1063.7h-10.85zM1711.63 935.8h10.85V1063.7h-10.85zM1725.02 933.8h10.85V1063.7h-10.85zM1738.41 935.8h10.85V1063.7h-10.85zM1751.80 935.8h10.85V1063.7h-10.85zM1765.19 935.8h10.85V1063.7h-10.85zM1778.58 935.8h10.85V1063.7h-10.85zM1791.97 935.8h10.85V1063.7h-10.85zM1805.36 931.9h10.85V1063.7h-10.85zM1818.75 935.8h10.85V1063.7h-10.85zM1832.14 935.8h10.85V1063.7h-10.85zM1845.53 935.8h10.85V1063.7h-10.85zM1858.92 935.8h10.85V1063.7h-10.85zM1872.31 935.8h10.85V1063.7h-10.85zM1885.70 935.8h10.85V1063.7h-10.85zM1899.09 935.8h10.85V1063.7h-10.85zM1912.48 935.8h10.85V1063.7h-10.85zM1925.87 935.8h10.85V1063.7h-10.85zM1939.26 935.8h10.85V1063.7h-10.85zM1952.65 935.8h10.85V1063.7h-10.85zM1966.04 935.8h10.85V1063.7h-10.85zM1979.43 935.8h10.85V1063.7h-10.85zM1992.82 935.8h10.85V1063.7h-10.85zM2006.21 935.8h10.85V1063.7h-10.85zM2019.60 935.8h10.85V1063.7h-10.85zM2032.99 935.8h10.85V1063.7h-10.85zM2046.38 931.9h10.85V1063.7h-10.85zM2059.77 933.8h10.85V1063.7h-10.85zM2073.16 935.8h10.85V1063.7h-10.85zM2086.55 935.8h10.85V1063.7h-10.85zM2099.94 935.8h10.85V1063.7h-10.85zM2113.33 935.8h10.85V1063.7h-10.85zM2126.72 935.8h10.85V1063.7h-10.85zM2140.11 933.8h10.85V1063.7h-10.85zM2153.50 935.8h10.85V1063.7h-10.85zM2166.89 935.8h10.85V1063.7h-10.85zM2180.28 931.9h10.85V1063.7h-10.85zM2193.67 935.8h10.85V1063.7h-10.85zM2207.06 935.8h10.85V1063.7h-10.85zM2220.45 933.8h10.85V1063.7h-10.85zM2233.84 935.8h10.85V1063.7h-10.85zM2247.23 935.8h10.85V1063.7h-10.85zM2260.62 935.8h10.85V1063.7h-10.85zM2274.01 935.8h10.85V1063.7h-10.85zM2287.40 935.8h10.85V1063.7h-10.85zM2300.79 931.9h10.85V1063.7h-10.85zM2314.18 935.8h10.85V1063.7h-10.85zM2327.57 935.8h10.85V1063.7h-10.85zM2340.96 931.9h10.85V1063.7h-10.85zM2354.35 931.9h10.85V1063.7h-10.85zM2367.74 935.8h10.85V1063.7h-10.85zM2381.13 935.8h10.85V1063.7h-10.85zM2394.52 935.8h10.85V1063.7h-10.85zM2407.91 935.8h10.85V1063.7h-10.85zM2421.30 935.8h10.85V1063.7h-10.85zM2434.69 935.8h10.85V1063.7h-10.85zM2448.08 935.8h10.85V1063.7h-10.85zM2461.47 935.8h10.85V1063.7h-10.85zM2474.86 935.8h10.85V1063.7h-10.85zM2488.25 935.8h10.85V1063.7h-10.85zM2501.64 933.8h10.85V1063.7h-10.85zM2515.03 935.8h10.85V1063.7h-10.85zM2528.42 935.8h10.85V1063.7h-10.85zM2541.81 931.9h10.85V1063.7h-10.85zM2555.20 935.8h10.85V1063.7h-10.85zM2568.59 935.8h10.85V1063.7h-10.85zM2581.98 935.8h10.85V1063.7h-10.85zM2595.37 935.8h10.85V1063.7h-10.85z" fill="#fdd976"/></svg>
<div style="left:1484.00px;top:1062.70px;width:1125.00px;height:2.20px;background:#5e6580;"></div>
<div style="left:1490.50px;top:1064.90px;width:2.20px;height:8.80px;background:#5e6580;"></div>
<div class="t" style="left:1466.40px;top:1077px;font-size:20px;line-height:20px;color:#1c2b34;-webkit-text-stroke:0.4px;transform:scaleX(0.9863);transform-origin:0 0;">Fri 14</div>
<div style="left:1651.00px;top:1064.90px;width:2.20px;height:8.80px;background:#5e6580;"></div>
<div class="t" style="left:1624.10px;top:1077px;font-size:20px;line-height:20px;color:#1c2b34;-webkit-text-stroke:0.4px;transform:scaleX(0.9689);transform-origin:0 0;">Sat 15</div>
<div style="left:1811.50px;top:1064.90px;width:2.20px;height:8.80px;background:#5e6580;"></div>
<div class="t" style="left:1783.85px;top:1077px;font-size:20px;line-height:20px;color:#1c2b34;-webkit-text-stroke:0.4px;transform:scaleX(0.9567);transform-origin:0 0;">Jun 16</div>
<div style="left:1972.80px;top:1064.90px;width:2.20px;height:8.80px;background:#5e6580;"></div>
<div class="t" style="left:1939.15px;top:1077px;font-size:20px;line-height:20px;color:#1c2b34;-webkit-text-stroke:0.4px;transform:scaleX(1.0420);transform-origin:0 0;">Mon 17</div>
<div style="left:2133.50px;top:1064.90px;width:2.20px;height:8.80px;background:#5e6580;"></div>
<div class="t" style="left:2104.10px;top:1077px;font-size:20px;line-height:20px;color:#1c2b34;-webkit-text-stroke:0.4px;transform:scaleX(0.9919);transform-origin:0 0;">Tue 18</div>
<div style="left:2294.70px;top:1064.90px;width:2.20px;height:8.80px;background:#5e6580;"></div>
<div class="t" style="left:2261.05px;top:1077px;font-size:20px;line-height:20px;color:#1c2b34;-webkit-text-stroke:0.4px;transform:scaleX(1.0131);transform-origin:0 0;">Wed 19</div>
<div style="left:2455.60px;top:1064.90px;width:2.20px;height:8.80px;background:#5e6580;"></div>
<div class="t" style="left:2425.20px;top:1077px;font-size:20px;line-height:20px;color:#1c2b34;-webkit-text-stroke:0.4px;transform:scaleX(1.0112);transform-origin:0 0;">Thu 20</div>
<div style="left:1464.00px;top:1131.00px;width:22.00px;height:22.00px;background:#7f0026;border-radius:4px;"></div>
<div class="t" style="left:1498.40px;top:1132px;font-size:22px;line-height:22px;color:#1c2b34;-webkit-text-stroke:0.4px;transform:scaleX(1.0356);transform-origin:0 0;">Critical</div>
<div style="left:1601.00px;top:1131.00px;width:22.00px;height:22.00px;background:#e31c1e;border-radius:4px;"></div>
<div class="t" style="left:1635.40px;top:1132px;font-size:22px;line-height:22px;color:#1c2b34;-webkit-text-stroke:0.4px;transform:scaleX(1.0617);transform-origin:0 0;">High</div>
<div style="left:1716.00px;top:1131.00px;width:22.00px;height:22.00px;background:#fd8d3d;border-radius:4px;"></div>
<div class="t" style="left:1750.90px;top:1132px;font-size:22px;line-height:22px;color:#1c2b34;-webkit-text-stroke:0.4px;transform:scaleX(1.0753);transform-origin:0 0;">Medium</div>
<div style="left:1868.00px;top:1131.00px;width:22.00px;height:22.00px;background:#fdd976;border-radius:4px;"></div>
<div class="t" style="left:1902.50px;top:1132px;font-size:22px;line-height:22px;color:#1c2b34;-webkit-text-stroke:0.4px;transform:scaleX(1.0107);transform-origin:0 0;">Low</div>
<div style="left:2.00px;top:1340.00px;width:2700.00px;height:2.00px;background:#e2e5ee;"></div>
<div class="t" style="left:51.40px;top:1281px;font-size:30.5px;line-height:30.5px;color:#1c2b34;-webkit-text-stroke:0.4px;transform:scaleX(0.9921);transform-origin:0 0;">Risk Overview</div>
<div style="left:48.00px;top:1332.00px;width:199.00px;height:8.00px;background:#006bc2;"></div>
<div class="t" style="left:342.30px;top:1281px;font-size:30.5px;line-height:30.5px;color:#616c75;-webkit-text-stroke:0.4px;transform:scaleX(1.0085);transform-origin:0 0;">Runtime Schemas</div>
<div class="t" style="left:690.50px;top:1281px;font-size:30.5px;line-height:30.5px;color:#616c75;-webkit-text-stroke:0.4px;transform:scaleX(0.9586);transform-origin:0 0;">Traces</div>
<div class="t" style="left:876.00px;top:1281px;font-size:30.5px;line-height:30.5px;color:#616c75;-webkit-text-stroke:0.4px;transform:scaleX(0.9462);transform-origin:0 0;">HTTP Access</div>
<div style="left:1066.70px;top:1276.30px;width:40.40px;height:40.40px;background:#f8f9fa;border-radius:21px;"></div>
<div class="t" style="left:1081.17px;top:1286px;font-size:21px;line-height:21px;color:#5e6670;font-weight:700;">0</div>
<div style="left:50.00px;top:1390.00px;width:1294.00px;height:226.50px;background:#fff;border-radius:9px;border:2px solid #e1e4ed;"></div>
<div style="left:1360.00px;top:1390.00px;width:1294.00px;height:226.50px;background:#fff;border-radius:9px;border:2px solid #e1e4ed;"></div>
<div style="left:84.00px;top:1432.00px;width:40.00px;height:40.00px;background:#fff4e2;border-radius:7px;"></div>
<svg style="left:93.5px;top:1438.8px" width="21.1" height="26.2" viewBox="0 0 21.1 26.2"><path d="M10.550 1.250L1.080 6.200V14.500C1.080 19 4.500 21.500 10.550 24.900 16.600 21.500 20.020 19 20.020 14.500V6.200z" fill="none" stroke="#d4570a" stroke-width="2.150" stroke-linejoin="round"/><path d="M10.400 6.100V14.950" stroke="#d4570a" stroke-width="2.300" fill="none"/><circle cx="10.300" cy="18.550" r="1.850" fill="#d4570a"/></svg>
<div class="t" style="left:141.40px;top:1440px;font-size:26px;line-height:26px;color:#5d6872;font-weight:700;transform:scaleX(0.9156);transform-origin:0 0;">EXPOSED TO ATTACKS</div>
<svg style="left:1268px;top:1438px" width="28" height="28" viewBox="0 0 28 28"><circle cx="14" cy="14" r="13.950" fill="#0468c5"/><path d="M7.100 8.700C8.600 6 11 4.700 14.200 4.700 18 4.700 20.800 6.800 20.800 10 20.800 12.400 19.400 13.600 17.700 14.800 16.400 15.700 16 16.300 16 17.600H11.200C11.200 15.200 11.900 14 13.600 12.700 15 11.700 15.700 11.200 15.700 10.300 15.700 9.500 14.900 9 13.900 9 12.600 9 11.600 9.900 10.400 11.500z" fill="#fff"/><rect x="11.200" y="19.100" width="4.800" height="4.300" fill="#fff"/></svg>
<div style="left:84.10px;top:1496.00px;width:270.00px;height:41.50px;background:#fff4e2;border-radius:8px;"></div>
<svg style="left:96.1px;top:1500.7px" width="24" height="30.5" viewBox="0 0 24 30.5"><g fill="none" stroke="#ef7d0c" stroke-width="2.250" stroke-linejoin="round"><path d="M12.100 1.300L1.150 7.700V17C1.150 22.500 5 25.500 12 29.200 19 25.500 22.900 22.500 22.900 17V7.700z"/><path d="M12 1.300V29.200M1.600 7.900L11.500 13M1.600 15.200L11.500 20.300"/></g></svg>
<div class="t" style="left:138.10px;top:1503px;font-size:26px;line-height:26px;color:#ee790a;-webkit-text-stroke:0.4px;transform:scaleX(1.0583);transform-origin:0 0;">exploit_detection</div>
<div style="left:362.10px;top:1496.00px;width:296.80px;height:41.50px;background:#fff4e2;border-radius:8px;"></div>
<svg style="left:374.1px;top:1500.7px" width="24" height="30.5" viewBox="0 0 24 30.5"><g fill="none" stroke="#ef7d0c" stroke-width="2.250" stroke-linejoin="round"><path d="M12.100 1.300L1.150 7.700V17C1.150 22.500 5 25.500 12 29.200 19 25.500 22.900 22.500 22.900 17V7.700z"/><path d="M12 1.300V29.200M1.600 7.900L11.500 13M1.600 15.200L11.500 20.300"/></g></svg>
<div class="t" style="left:416.76px;top:1503px;font-size:26px;line-height:26px;color:#ee790a;-webkit-text-stroke:0.4px;transform:scaleX(1.0194);transform-origin:0 0;">java_code_injection</div>
<div style="left:667.00px;top:1496.00px;width:266.00px;height:41.50px;background:#fff4e2;border-radius:8px;"></div>
<svg style="left:679px;top:1500.7px" width="24" height="30.5" viewBox="0 0 24 30.5"><g fill="none" stroke="#ef7d0c" stroke-width="2.250" stroke-linejoin="round"><path d="M12.100 1.300L1.150 7.700V17C1.150 22.500 5 25.500 12 29.200 19 25.500 22.900 22.500 22.900 17V7.700z"/><path d="M12 1.300V29.200M1.600 7.900L11.500 13M1.600 15.200L11.500 20.300"/></g></svg>
<div class="t" style="left:721.66px;top:1503px;font-size:26px;line-height:26px;color:#ee790a;-webkit-text-stroke:0.4px;transform:scaleX(1.0121);transform-origin:0 0;">js_code_injection</div>
<div style="left:1394.00px;top:1432.00px;width:40.00px;height:40.00px;background:#fff4e2;border-radius:7px;"></div>
<svg style="left:1400.1px;top:1438px" width="27.9" height="28.3" viewBox="0 0 27.9 28.3"><path d="M5.130 25.200V20.900C2.600 19.900 1.080 17.800 1.080 14.800V13.950A12.870 12.870 0 0 1 26.820 13.950V14.800C26.820 17.800 25.300 19.900 22.770 20.900V25.200A2 2 0 0 1 20.770 27.200H7.130A2 2 0 0 1 5.130 25.200z" fill="none" stroke="#dd5f0c" stroke-width="2.150"/><circle cx="8.870" cy="14.250" r="3" fill="#dd5f0c"/><circle cx="18.950" cy="14.250" r="3" fill="#dd5f0c"/><path d="M10.900 21.500V27.200M16.870 21.500V27.200" stroke="#dd5f0c" stroke-width="2.050" fill="none"/></svg>
<div class="t" style="left:1450.30px;top:1440px;font-size:26px;line-height:26px;color:#5d6872;font-weight:700;transform:scaleX(0.9251);transform-origin:0 0;">VULNERABLE</div>
<svg style="left:2578px;top:1438px" width="28" height="28" viewBox="0 0 28 28"><circle cx="14" cy="14" r="13.950" fill="#0468c5"/><path d="M7.100 8.700C8.600 6 11 4.700 14.200 4.700 18 4.700 20.800 6.800 20.800 10 20.800 12.400 19.400 13.600 17.700 14.800 16.400 15.700 16 16.300 16 17.600H11.200C11.200 15.200 11.900 14 13.600 12.700 15 11.700 15.700 11.200 15.700 10.300 15.700 9.500 14.900 9 13.900 9 12.600 9 11.600 9.900 10.400 11.500z" fill="#fff"/><rect x="11.200" y="19.100" width="4.800" height="4.300" fill="#fff"/></svg>
<div class="t" style="left:1395.40px;top:1503px;font-size:26px;line-height:26px;color:#5e6670;-webkit-text-stroke:0.4px;transform:scaleX(1.0487);transform-origin:0 0;">Library</div>
<div style="left:1394.00px;top:1543.20px;width:138.00px;height:39.50px;background:#fbdadf;border-radius:8px;"></div>
<div class="t" style="left:1405.20px;top:1553px;font-size:23px;line-height:23px;color:#9b0f1f;font-weight:700;transform:scaleX(0.9123);transform-origin:0 0;">3 CRITICAL</div>
<div style="left:1540.00px;top:1543.20px;width:98.00px;height:39.50px;background:#fdebee;border-radius:8px;"></div>
<div class="t" style="left:1551.50px;top:1553px;font-size:23px;line-height:23px;color:#e12c4b;font-weight:700;transform:scaleX(0.9647);transform-origin:0 0;">5 HIGH</div>
<div style="left:1646.00px;top:1543.20px;width:66.00px;height:39.50px;background:#fff;border-radius:8px;border:2px solid #c0c4de;"></div>
<div class="t" style="left:1660.95px;top:1553px;font-size:21px;line-height:21px;color:#1c2b34;-webkit-text-stroke:0.4px;transform:scaleX(1.0254);transform-origin:0 0;">+80</div>
<div style="left:50.00px;top:1633.00px;width:1294.00px;height:181.50px;background:#fff;border-radius:9px;border:2px solid #e1e4ed;"></div>
<div style="left:1360.00px;top:1633.00px;width:1294.00px;height:181.50px;background:#fff;border-radius:9px;border:2px solid #e1e4ed;"></div>
<div style="left:84.00px;top:1675.00px;width:40.00px;height:40.00px;background:#e9f4fd;border-radius:7px;"></div>
<svg style="left:91.6px;top:1683px" width="24.5" height="24.8" viewBox="0 0 24.5 24.8"><g transform="translate(14 9.950) rotate(45)" fill="none" stroke="#0b67c4" stroke-width="2.300" stroke-linejoin="miter"><path d="M-2.900 11.050V-8.100A2.900 2.950 0 0 1 2.900 -8.100V11.050z"/><path d="M-2.900 -0.400L-7.250 2.100-7.650 10H-2.900M2.900 -0.400L7.250 2.100 7.650 10H2.900"/></g><path d="M0.400 17.500V23.700H6.800z" fill="#0b67c4"/></svg>
<div class="t" style="left:140.30px;top:1683px;font-size:26px;line-height:26px;color:#5d6872;font-weight:700;transform:scaleX(1.0072);transform-origin:0 0;">IN PRODUCTION</div>
<svg style="left:1268px;top:1681px" width="28" height="28" viewBox="0 0 28 28"><circle cx="14" cy="14" r="13.950" fill="#0468c5"/><path d="M7.100 8.700C8.600 6 11 4.700 14.200 4.700 18 4.700 20.800 6.800 20.800 10 20.800 12.400 19.400 13.600 17.700 14.800 16.400 15.700 16 16.300 16 17.600H11.200C11.200 15.200 11.900 14 13.600 12.700 15 11.700 15.700 11.200 15.700 10.300 15.700 9.500 14.900 9 13.900 9 12.600 9 11.600 9.900 10.400 11.500z" fill="#fff"/><rect x="11.200" y="19.100" width="4.800" height="4.300" fill="#fff"/></svg>
<div style="left:84.10px;top:1739.30px;width:112.00px;height:42.00px;background:#f3f3f5;border-radius:7px;"></div>
<div class="t" style="left:93.00px;top:1747px;font-size:26px;line-height:26px;color:#4a5670;-webkit-text-stroke:0.4px;transform:scaleX(1.0236);transform-origin:0 0;">env:</div>
<div class="t" style="left:145.00px;top:1747px;font-size:26px;line-height:26px;color:#0f2a6b;-webkit-text-stroke:0.4px;transform:scaleX(1.0081);transform-origin:0 0;">dev</div>
<div style="left:204.00px;top:1739.30px;width:127.00px;height:42.00px;background:#f3f3f5;border-radius:7px;"></div>
<div class="t" style="left:212.90px;top:1747px;font-size:26px;line-height:26px;color:#4a5670;-webkit-text-stroke:0.4px;transform:scaleX(1.0236);transform-origin:0 0;">env:</div>
<div class="t" style="left:266.40px;top:1747px;font-size:26px;line-height:26px;color:#0f2a6b;-webkit-text-stroke:0.4px;transform:scaleX(1.0712);transform-origin:0 0;">prod</div>
<div style="left:339.20px;top:1739.30px;width:160.00px;height:42.00px;background:#f3f3f5;border-radius:7px;"></div>
<div class="t" style="left:348.10px;top:1747px;font-size:26px;line-height:26px;color:#4a5670;-webkit-text-stroke:0.4px;transform:scaleX(1.0236);transform-origin:0 0;">env:</div>
<div class="t" style="left:400.90px;top:1747px;font-size:26px;line-height:26px;color:#0f2a6b;-webkit-text-stroke:0.4px;transform:scaleX(1.0662);transform-origin:0 0;">staging</div>
<div style="left:1394.00px;top:1675.00px;width:40.00px;height:40.00px;background:#eff1f5;border-radius:7px;"></div>
<svg style="left:1401.2px;top:1682.2px" width="25.5" height="25.8" viewBox="0 0 25.5 25.8"><g fill="none" stroke="#555d6c" stroke-width="2.050"><path d="M1.020 6.600V1.020H6.600M18.900 1.020H24.480V6.600M24.480 19.200V24.780H18.900M6.600 24.780H1.020V19.200"/><path d="M2.200 12.900C5.500 8 8.800 5.400 12.800 5.400S20.100 8 23.400 12.900C20.100 17.800 16.800 20.400 12.800 20.400S5.500 17.800 2.200 12.900z" stroke-linejoin="round"/><circle cx="12.750" cy="12.950" r="3.200"/></g></svg>
<div class="t" style="left:1451.30px;top:1683px;font-size:26px;line-height:26px;color:#5d6872;font-weight:700;transform:scaleX(0.9447);transform-origin:0 0;">NOT PROCESSING SENSITIVE DATA</div>
<svg style="left:2578px;top:1681px" width="28" height="28" viewBox="0 0 28 28"><circle cx="14" cy="14" r="13.950" fill="#0468c5"/><path d="M7.100 8.700C8.600 6 11 4.700 14.200 4.700 18 4.700 20.800 6.800 20.800 10 20.800 12.400 19.400 13.600 17.700 14.800 16.400 15.700 16 16.300 16 17.600H11.200C11.200 15.200 11.900 14 13.600 12.700 15 11.700 15.700 11.200 15.700 10.300 15.700 9.500 14.900 9 13.900 9 12.600 9 11.600 9.900 10.400 11.500z" fill="#fff"/><rect x="11.200" y="19.100" width="4.800" height="4.300" fill="#fff"/></svg>
<div class="t" style="left:1393.90px;top:1746px;font-size:26px;line-height:26px;color:#1c2b34;-webkit-text-stroke:0.4px;transform:scaleX(1.0541);transform-origin:0 0;">We didn't detect any request processing sensitive data.</div>
<div style="left:50.00px;top:1830.00px;width:1294.00px;height:100.00px;background:#fff;border-radius:9px;border:2px solid #e1e4ed;"></div>
<div style="left:1360.00px;top:1830.00px;width:1294.00px;height:100.00px;background:#fff;border-radius:9px;border:2px solid #e1e4ed;"></div>
</div></body></html>
